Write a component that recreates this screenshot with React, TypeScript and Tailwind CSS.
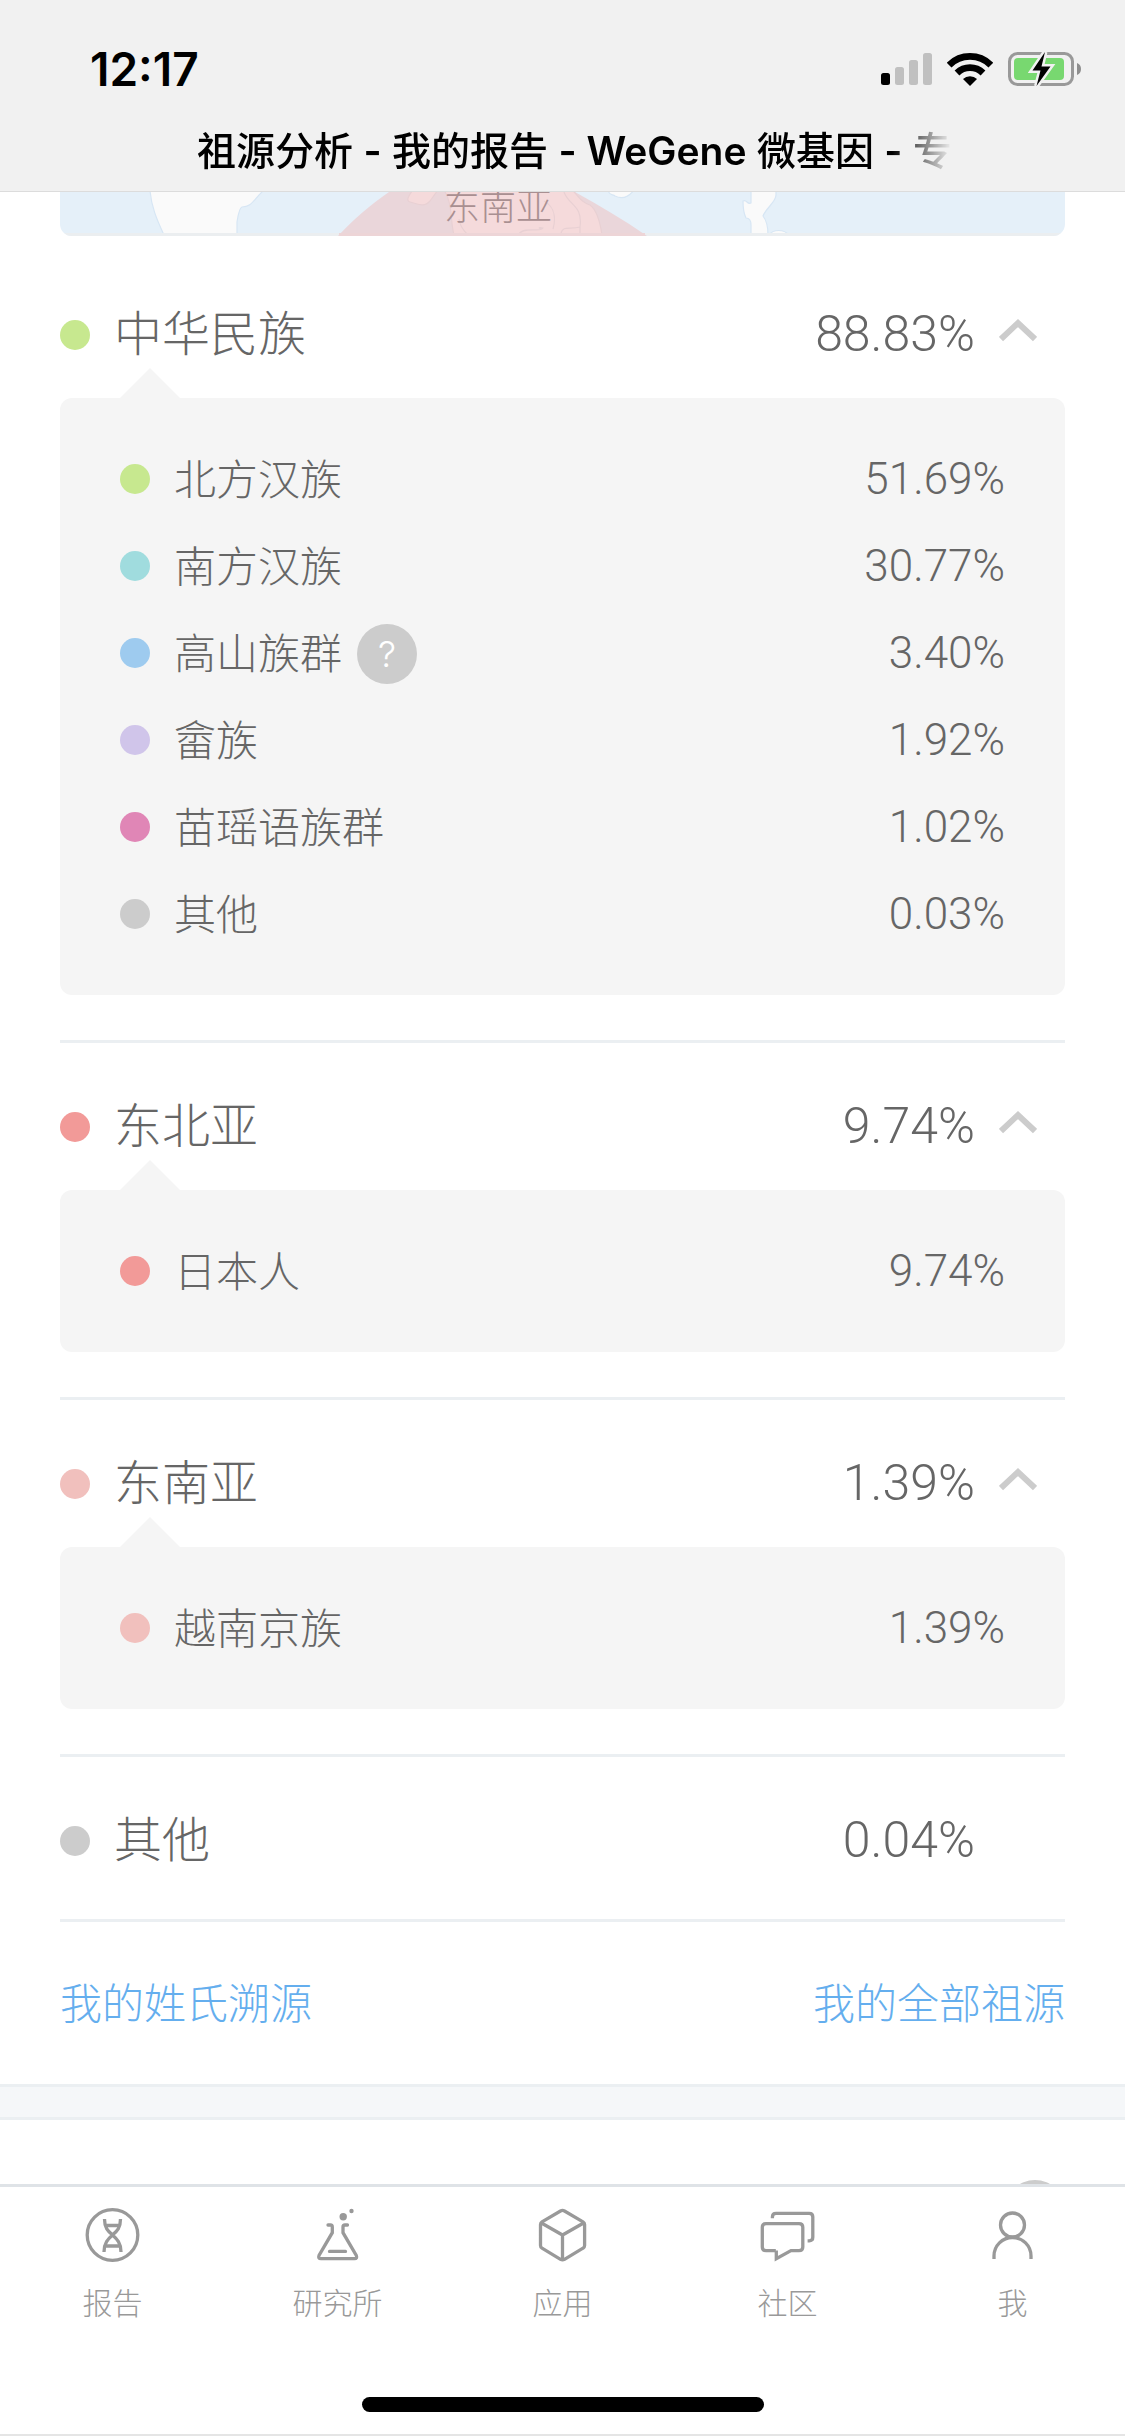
import { useState } from 'react';
import type { ReactNode } from 'react';
import clsx from 'clsx';

type Item = {
  name: string;
  value: string;
  dot: string;
  hint?: boolean;
};

type Group = Item & { children?: Item[] };

const GROUPS: Group[] = [
  {
    name: '中华民族',
    value: '88.83%',
    dot: 'bg-[#c7e88f]',
    children: [
      { name: '北方汉族', value: '51.69%', dot: 'bg-[#c7e88f]' },
      { name: '南方汉族', value: '30.77%', dot: 'bg-[#a0dcde]' },
      { name: '高山族群', value: '3.40%', dot: 'bg-[#9ecbef]', hint: true },
      { name: '畲族', value: '1.92%', dot: 'bg-[#d0c5ea]' },
      { name: '苗瑶语族群', value: '1.02%', dot: 'bg-[#e086b6]' },
      { name: '其他', value: '0.03%', dot: 'bg-[#cccccc]' },
    ],
  },
  {
    name: '东北亚',
    value: '9.74%',
    dot: 'bg-[#f29a98]',
    children: [{ name: '日本人', value: '9.74%', dot: 'bg-[#f29a98]' }],
  },
  {
    name: '东南亚',
    value: '1.39%',
    dot: 'bg-[#f1c0bd]',
    children: [{ name: '越南京族', value: '1.39%', dot: 'bg-[#f1c0bd]' }],
  },
  { name: '其他', value: '0.04%', dot: 'bg-[#cccccc]' },
];

function Dot({ color }: { color: string }) {
  return <span className={clsx('size-[30px] shrink-0 rounded-full', color)} />;
}

function StatusIcons() {
  return (
    <div className="flex items-center gap-[15px]">
      <svg width="51" height="32" viewBox="0 0 51 32" fill="#c0c0c0">
        <rect x="0" y="20" width="9" height="12" rx="2.5" fill="#000" />
        <rect x="14" y="14" width="9" height="18" rx="2.5" />
        <rect x="28" y="7" width="9" height="25" rx="2.5" />
        <rect x="42" y="0" width="9" height="32" rx="2.5" />
      </svg>
      <svg width="46" height="33" viewBox="0 0 46 33" fill="none" stroke="#000" strokeWidth="6.8">
        <path d="M2.1 12.1A29.5 29.5 0 0 1 43.9 12.1" />
        <path d="M10 20A18.5 18.5 0 0 1 36 20" />
        <path d="M23 33L16 26A10 10 0 0 1 30 26Z" fill="#000" stroke="none" />
      </svg>
      <svg width="73" height="34" viewBox="0 0 73 34">
        <rect x="1.5" y="1.5" width="63" height="31" rx="8" fill="none" stroke="#999" strokeWidth="3" />
        <rect x="6" y="6" width="50" height="22" rx="4" fill="#78d870" />
        <path d="M69 11Q73 12.5 73 17T69 23Z" fill="#8e8e8e" />
        <path
          d="M37 0L24.5 18.5H32.5L28.5 34L42.5 14.5H33.5Z"
          fill="#000"
          stroke="#f1f1f1"
          strokeWidth="5"
          paintOrder="stroke"
        />
      </svg>
    </div>
  );
}

function Header() {
  return (
    <header className="shrink-0 border-b border-[#dcdcdc] bg-[#f1f1f1] pt-11 text-black">
      <div className="flex h-[50px] items-center justify-between pr-11 pl-[90px]">
        <time className="text-[46px] leading-[50px] font-semibold">12:17</time>
        <StatusIcons />
      </div>
      <div className="mt-[21px] flex h-[76px] items-start justify-center pt-1.5 pl-6">
        <h1 className="overflow-hidden text-[39px] leading-[60px] font-medium whitespace-nowrap [mask-image:linear-gradient(to_left,transparent,black_60px)]">
          祖源分析 <b className="font-semibold">-</b> 我的报告 <b className="font-semibold">- WeGene</b> 微基因{' '}
          <b className="font-semibold">-</b> 专
        </h1>
      </div>
    </header>
  );
}

function MapStrip() {
  return (
    <svg
      viewBox="0 0 1005 44"
      preserveAspectRatio="xMidYMin slice"
      className="block h-11 w-full rounded-b-xl bg-[#e5f0f9]"
    >
      <g fill="#fafafa" stroke="#d7e6f4" strokeWidth="1.2">
        <path d="M90 -2C91 14 97 28 104 43H177V30C178 24 179 16 182 15C192 15 193 8 204 -2Z" />
        <path d="M548 -2C549 4 553 2 555 4C561 7 568 6 574 -2Z" />
        <path d="M691 -2V11C687 13 687 7 683 9C683 16 684 22 686 26C690 26 691 29 691 33V43H708C708 34 707 29 703 24C706 16 716 10 716 3V-2Z" />
        <path d="M709 43C713 37 724 37 729 43Z" />
      </g>
      <path d="M0 42.5H1005" stroke="#ebeef0" strokeWidth="3" />
      <path d="M329 0C310 13 294 27 278 44H587C564 28 540 14 515 0Z" fill="#ead6da" />
      <g fill="#f5dadb" stroke="#e8d0d3" strokeWidth="1.2">
        <path d="M353 -2C348 4 346 9 350 10C358 12 364 16 370 9L378 -2Z" />
        <path d="M384 -2C393 12 390 28 394 43H542C539 22 534 16 530 13C520 10 519 4 512 -2Z" />
        <path d="M459 42C464 34 482 41 483 36C477 35 479 37 483 36M484 9C497 16 495 30 493 37M504 0C509 14 523 13 520 35C510 38 503 33 501 41M520 35V43M399 27C400 34 403 38 407 42" fill="none" />
      </g>
      <path d="M279 42.5H585" stroke="#edd5d7" strokeWidth="3" />
      <text x="438" y="28" textAnchor="middle" fontSize="36" fontWeight="300" fill="#a98f91">
        东南亚
      </text>
    </svg>
  );
}

function HelpButton({ label, children }: { label: string; children?: ReactNode }) {
  return (
    <button
      type="button"
      aria-label={label}
      className="flex size-[60px] shrink-0 items-center justify-center rounded-full bg-[#cccccc] text-[36px] leading-[60px] font-light text-white"
    >
      {children}
    </button>
  );
}

function GroupSection({ group }: { group: Group }) {
  const [open, setOpen] = useState(true);
  const { name, value, dot, children } = group;

  const title = (
    <>
      <Dot color={dot} />
      <span className="pb-0.5 text-[48px] leading-[60px]">{name}</span>
      <span className="ml-auto pb-0.5 font-['Roboto',sans-serif] text-[50px] leading-[60px]">{value}</span>
    </>
  );

  if (!children) {
    return (
      <section className="border-b-[3px] border-[#ebeff2] pt-[54px] pb-12">
        <div className="flex h-[60px] items-center gap-6 pr-[90px]">{title}</div>
      </section>
    );
  }

  return (
    <section className="border-b-[3px] border-[#ebeff2] pt-[54px] pb-[45px]">
      <button
        type="button"
        aria-expanded={open}
        onClick={() => setOpen(!open)}
        className="flex h-[60px] w-full items-center gap-6 pr-7 text-left"
      >
        {title}
        <svg
          width="38"
          height="24"
          viewBox="0 0 38 24"
          fill="none"
          stroke="#ccc"
          strokeWidth="6"
          className={clsx('mb-2.5 shrink-0', !open && 'rotate-180')}
        >
          <path d="M2 21L19 5L36 21" />
        </svg>
      </button>

      {open && (
        <div className="relative mt-[33px] rounded-xl bg-[#f5f5f5] px-[60px] pt-[37px] pb-[38px]">
          <svg
            width="60"
            height="30"
            viewBox="0 0 60 30"
            fill="#f5f5f5"
            className="absolute bottom-full left-[60px]"
          >
            <path d="M0 30L30 0L60 30Z" />
          </svg>
          <ul>
            {children.map((item) => (
              <li key={item.name} className="flex h-[87px] items-center gap-6">
                <Dot color={item.dot} />
                <span className="flex items-center gap-[15px] pt-0.5 text-[42px] leading-[60px]">
                  {item.name}
                  {item.hint && <HelpButton label={`${item.name}说明`}>?</HelpButton>}
                </span>
                <span className="ml-auto font-['Roboto',sans-serif] text-[44px] leading-[60px]">{item.value}</span>
              </li>
            ))}
          </ul>
        </div>
      )}
    </section>
  );
}

const TABS: { label: string; icon: ReactNode }[] = [
  {
    label: '报告',
    icon: (
      <>
        <circle cx="29.5" cy="30" r="25.3" />
        <path d="M21.5 14C21.5 23 25 26 29.5 30S38 38 38 47M37.5 14C37.5 23 34 26 29.5 30S21 38 21 47" />
        <path d="M23 20.5H36M23 41H36" />
      </>
    ),
  },
  {
    label: '研究所',
    icon: (
      <>
        <path
          d="M20 20H22.5Q24.3 20 24.3 22V27.7L11 50.5Q9.8 53.7 13 53.7H46.5Q49.5 53.7 48.3 50.5L35 27.7V22Q35 20 37 20H39.5M21.5 46.4H37.5"
          strokeLinecap="round"
        />
        <circle cx="35.2" cy="11.7" r="3.7" fill="#999" stroke="none" />
        <circle cx="43.5" cy="6" r="2.2" fill="#999" stroke="none" />
      </>
    ),
  },
  {
    label: '应用',
    icon: (
      <path d="M27.5 6L9 16.8Q7.5 17.8 7.5 19.5V40.5Q7.5 42.3 9 43.2L27.5 54.3Q29.5 55.4 31.5 54.3L50 43.2Q51.6 42.3 51.6 40.5V19.5Q51.6 17.8 50 16.8L31.5 6Q29.5 4.9 27.5 6ZM8 17.8L29.5 30L51 17.8M29.5 30V55" />
    ),
  },
  {
    label: '社区',
    icon: (
      <path d="M17.8 45.6H8Q4.3 45.6 4.3 42V22.3Q4.3 18.6 8 18.6H41Q44.8 18.6 44.8 22.3V42Q44.8 45.6 41 45.6H33L18.3 53.8V45.6M14.4 13.3V12Q14.4 8.4 18 8.4H51.2Q54.8 8.4 54.8 12V32.3Q54.8 35.8 51.2 35.8H49.6" />
    ),
  },
  {
    label: '我',
    icon: (
      <>
        <circle cx="29.5" cy="20" r="12" />
        <path d="M11 54V51A18.5 18.5 0 0 1 48 51V54" />
      </>
    ),
  },
];

function TabBar() {
  return (
    <nav className="shrink-0 border-t-[3px] border-b-2 border-t-[#dfe3e7] border-b-[#e5e5e5] bg-white">
      <div className="grid grid-cols-5 pt-[18px]">
        {TABS.map((tab) => (
          <a key={tab.label} href="#" className="flex flex-col items-center gap-[18px] text-[#999]">
            <svg width="60" height="60" viewBox="0 0 60 60" fill="none" stroke="#999" strokeWidth="3.3">
              {tab.icon}
            </svg>
            <span className="text-[30px] leading-[40px]">{tab.label}</span>
          </a>
        ))}
      </div>
      <div className="mx-auto mt-[74px] mb-[22px] h-[15px] w-[402px] rounded-full bg-black" />
    </nav>
  );
}

export default function App() {
  return (
    <div className="flex h-dvh flex-col bg-white font-['Inter','Noto_Sans_CJK_SC',sans-serif] font-light text-[#666]">
      <Header />
      <main className="min-h-0 flex-1 overflow-y-auto [scrollbar-width:none]">
        <div className="px-[60px]">
          <MapStrip />
          <div className="mt-[15px]">
            {GROUPS.map((group) => (
              <GroupSection key={group.name} group={group} />
            ))}
          </div>
          <div className="flex h-[162px] items-center justify-between pt-0.5 text-[42px] leading-[60px] text-[#64aeee]">
            <a href="#">我的姓氏溯源</a>
            <a href="#">我的全部祖源</a>
          </div>
        </div>
        <div className="h-9 border-y-[3px] border-[#ebeff2] bg-[#f5f7f9]" />
        <div className="flex justify-end px-[60px] pt-[60px]">
          <HelpButton label="说明" />
        </div>
      </main>
      <TabBar />
    </div>
  );
}
